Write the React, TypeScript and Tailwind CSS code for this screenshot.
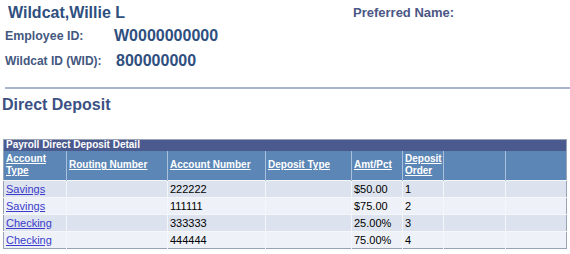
const rows = [
  { type: 'Savings', routing: '', account: '222222', depType: '', amt: '$50.00', order: '1' },
  { type: 'Savings', routing: '', account: '111111', depType: '', amt: '$75.00', order: '2' },
  { type: 'Checking', routing: '', account: '333333', depType: '', amt: '25.00%', order: '3' },
  { type: 'Checking', routing: '', account: '444444', depType: '', amt: '75.00%', order: '4' },
];

const App = () => {
  return (
    <div className="w-[570px] h-[254px] bg-white overflow-hidden font-['Liberation_Sans',Arial,sans-serif]">
      {/* employee header */}
      <div className="flex pt-[3px]">
        <div className="w-[353px] pl-[8px] text-[16px] font-bold leading-[20px] text-[#2f4f7f]">Wildcat,Willie L</div>
        <div className="pt-[3px] text-[13px] font-bold leading-[14px] text-[#4b5786]">Preferred Name:</div>
      </div>
      <div className="flex items-center h-[18px] mt-[4px] pl-[5px]">
        <div className="w-[109px] text-[12.4px] font-bold leading-[16px] text-[#44587f]">Employee ID:</div>
        <div className="text-[16px] font-bold leading-[18px] text-[#2f4f7f]">W0000000000</div>
      </div>
      <div className="flex items-center h-[18px] mt-[7px] pl-[5px]">
        <div className="w-[111px] text-[12px] font-bold leading-[16px] text-[#44587f]">Wildcat ID (WID):</div>
        <div className="text-[16px] font-bold leading-[18px] text-[#2f4f7f]">800000000</div>
      </div>
      <div className="ml-[5px] mt-[17px] h-[2px] bg-[#a9b4d2]" />
      <div className="pl-[2px] mt-[6px] text-[16px] font-bold leading-[20px] text-[#3b5183]">Direct Deposit</div>

      {/* deposit grid */}
      <table className="ml-[3px] mt-[24px] w-[563px] table-fixed border-collapse border border-[#9aa3b5] text-[11px] leading-[13px]">
        <colgroup>
          <col className="w-[63px]" />
          <col className="w-[101px]" />
          <col className="w-[98px]" />
          <col className="w-[86px]" />
          <col className="w-[51px]" />
          <col className="w-[41px]" />
          <col className="w-[62px]" />
          <col className="w-[61px]" />
        </colgroup>
        <thead>
          <tr>
            <th colSpan={8} className="h-[11px] bg-[#4a5a8e] px-[2px] text-left text-[10px] font-bold text-white leading-[10px]">
              Payroll Direct Deposit Detail
            </th>
          </tr>
          <tr className="h-[30px] bg-[#5b86b6] text-left text-white text-[10px] font-bold leading-[12px]">
            {['Account Type', 'Routing Number', 'Account Number', 'Deposit Type', 'Amt/Pct', 'Deposit Order', '', ''].map((h, i) => (
              <th key={i} className="border-l border-[#a8c0dc] first:border-l-0 px-[2px] align-middle text-left font-bold">
                {h && <span className="underline">{h}</span>}
              </th>
            ))}
          </tr>
        </thead>
        <tbody>
          {rows.map((r, i) => (
            <tr key={i} className={i % 2 === 0 ? 'h-[17px] bg-[#dce3ee]' : 'h-[17px] bg-[#eef2f8]'}>
              <td className="px-[2px] border-t border-[#f4f6fa]">
                <a href="#" className="text-[#3a3acc] underline">{r.type}</a>
              </td>
              <td className="border-l border-t border-[#f4f6fa]">{r.routing}</td>
              <td className="px-[2px] border-l border-t border-[#f4f6fa] text-black">{r.account}</td>
              <td className="border-l border-t border-[#f4f6fa]">{r.depType}</td>
              <td className="px-[2px] border-l border-t border-[#f4f6fa] text-black">{r.amt}</td>
              <td className="px-[2px] border-l border-t border-[#f4f6fa] text-black">{r.order}</td>
              <td className="border-l border-t border-[#f4f6fa]" />
              <td className="border-l border-t border-[#f4f6fa]" />
            </tr>
          ))}
        </tbody>
      </table>
    </div>
  );
};

export default App;
